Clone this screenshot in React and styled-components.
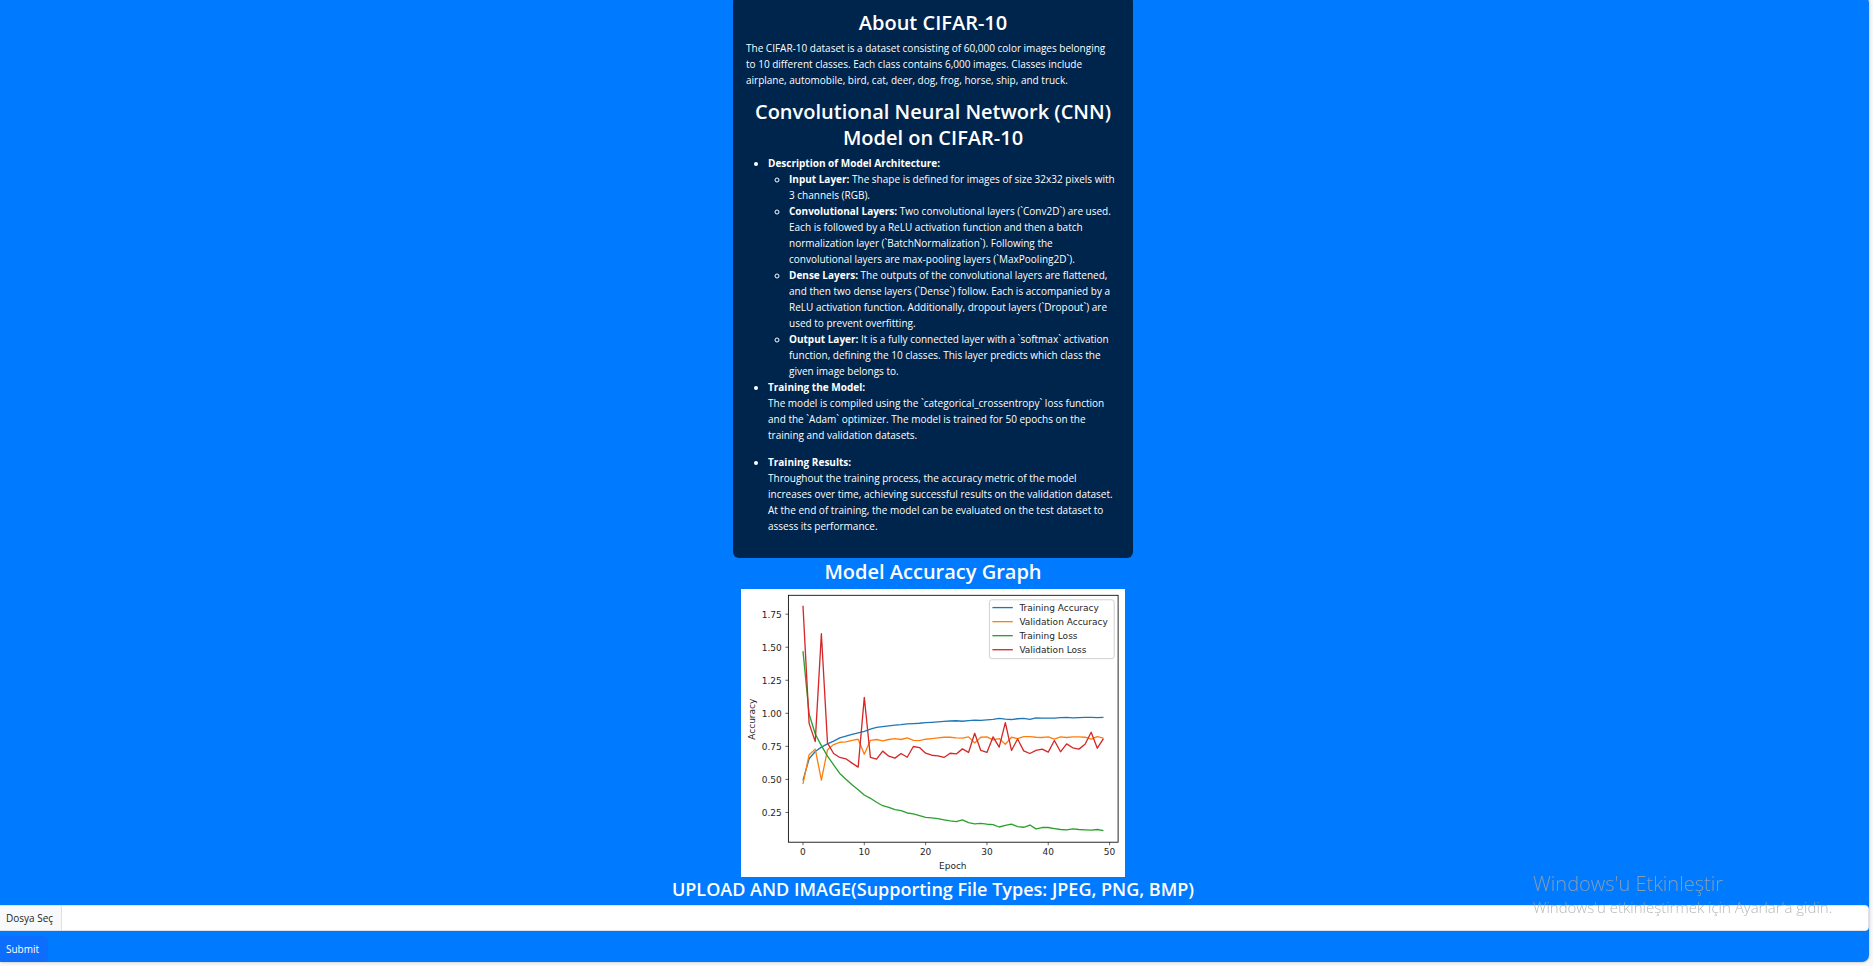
import React from "react";
import styled, { createGlobalStyle } from "styled-components";

const GlobalStyle = createGlobalStyle`
  *, *::before, *::after { box-sizing: border-box; }
  body {
    margin: 0;
    background: #f8f8f8;
    color: #fff;
    font: 400 10px/16px "Segoe UI", "Open Sans", "Noto Sans", sans-serif;
    overflow: hidden;
  }
`;

const Panel = styled.main`
  display: flex;
  flex-direction: column;
  align-items: center;
  margin: -4px 4px 4px -3px;
  background: #007bff;
  border-radius: 7px;
  box-shadow: 0 0 3px rgba(0, 0, 0, 0.3);
`;

const InfoCard = styled.article`
  width: 400px;
  max-width: 100%;
  padding: 13px;
  background: #00254c;
  border-radius: 6px;

  > p,
  > ul {
    margin-right: 3px;
  }
`;

const Title = styled.h2`
  margin: 1px 0 4px;
  font-size: 20px;
  line-height: 26px;
  font-weight: 600;
  text-align: center;
`;

const UploadTitle = styled(Title).attrs({ as: "h3" })`
  font-size: 18px;
  line-height: 23px;
`;

const Paragraph = styled.p`
  margin: 0 0 11px;
`;

const List = styled.ul`
  margin: 0;
  padding-left: 22px;
`;

const SubList = styled(List)`
  padding-left: 21px;
`;

const Chart = styled.svg`
  display: block;
  width: 384px;
  max-width: 100%;
  height: auto;
  background: #fff;
  font-family: "DejaVu Sans", sans-serif;
  font-size: 15px;
  fill: #262626;
`;

const UploadForm = styled.form`
  display: flex;
  flex-direction: column;
  align-items: flex-start;
  gap: 5px;
  width: 100%;
`;

const FileField = styled.label`
  position: relative;
  display: flex;
  width: 100%;
  height: 26px;
  overflow: hidden;
  background: #fff;
  border: 1px solid #dee2e6;
  border-radius: 4px;
  color: #212529;
`;

const FileInput = styled.input`
  position: absolute;
  inset: 0;
  width: 100%;
  opacity: 0;
  cursor: pointer;
`;

const FileButton = styled.span`
  padding: 4px 8px;
  background: #f8f9fa;
  border-right: 1px solid #dee2e6;
`;

const SubmitButton = styled.button`
  height: 26px;
  padding: 4px 8px;
  border: 1px solid #0d6efd;
  border-radius: 4px;
  background: #0d6efd;
  color: #fff;
  font: inherit;
`;

const Watermark = styled.aside`
  position: fixed;
  right: 42px;
  bottom: 49px;
  width: 298px;
  color: rgba(165, 165, 165, 0.8);
  font-size: 15px;
  line-height: 20px;
  font-weight: 300;
  white-space: nowrap;
  pointer-events: none;
`;

const WatermarkTitle = styled.div`
  font-size: 20px;
  line-height: 26px;
`;

const series = [
  {
    name: "Training Accuracy",
    color: "#1f77b4",
    values: [0.493, 0.656, 0.711, 0.744, 0.769, 0.79, 0.814, 0.827, 0.84, 0.852, 0.864, 0.88, 0.893, 0.9, 0.905, 0.91, 0.914, 0.92, 0.922, 0.925, 0.93, 0.932, 0.935, 0.939, 0.942, 0.944, 0.94, 0.945, 0.949, 0.947, 0.951, 0.954, 0.962, 0.956, 0.953, 0.959, 0.962, 0.954, 0.965, 0.963, 0.963, 0.964, 0.967, 0.969, 0.965, 0.968, 0.97, 0.97, 0.968, 0.97],
  },
  {
    name: "Validation Accuracy",
    color: "#ff7f0e",
    values: [0.467, 0.686, 0.729, 0.495, 0.724, 0.764, 0.781, 0.784, 0.796, 0.804, 0.691, 0.796, 0.802, 0.791, 0.802, 0.809, 0.802, 0.814, 0.796, 0.794, 0.804, 0.809, 0.814, 0.819, 0.819, 0.814, 0.812, 0.822, 0.776, 0.819, 0.822, 0.799, 0.809, 0.766, 0.819, 0.809, 0.824, 0.824, 0.819, 0.817, 0.822, 0.804, 0.822, 0.817, 0.822, 0.822, 0.819, 0.804, 0.824, 0.812],
  },
  {
    name: "Training Loss",
    color: "#2ca02c",
    values: [1.471, 0.995, 0.844, 0.756, 0.676, 0.61, 0.545, 0.502, 0.46, 0.422, 0.382, 0.357, 0.327, 0.301, 0.289, 0.271, 0.264, 0.246, 0.239, 0.226, 0.213, 0.209, 0.203, 0.194, 0.186, 0.181, 0.194, 0.173, 0.163, 0.168, 0.161, 0.158, 0.14, 0.153, 0.161, 0.143, 0.138, 0.155, 0.126, 0.136, 0.136, 0.128, 0.121, 0.118, 0.126, 0.121, 0.118, 0.116, 0.121, 0.113],
  },
  {
    name: "Validation Loss",
    color: "#d62728",
    values: [1.814, 0.924, 0.786, 1.602, 0.774, 0.696, 0.666, 0.656, 0.623, 0.593, 1.121, 0.666, 0.653, 0.714, 0.676, 0.661, 0.696, 0.668, 0.749, 0.741, 0.698, 0.683, 0.678, 0.666, 0.698, 0.693, 0.731, 0.704, 0.849, 0.719, 0.704, 0.822, 0.744, 0.929, 0.719, 0.806, 0.716, 0.696, 0.719, 0.729, 0.706, 0.794, 0.709, 0.769, 0.739, 0.729, 0.766, 0.857, 0.736, 0.809],
  },
];

const xTicks = [0, 10, 20, 30, 40, 50];
const yTicks = [0.25, 0.5, 0.75, 1, 1.25, 1.5, 1.75];
const xAt = (epoch) => 103.3 + epoch * 10.22;
const yAt = (value) => 207.2 + (1 - value) * 220.3;
const toPoints = (values) => values.map((v, i) => `${xAt(i)},${yAt(v)}`).join(" ");

function AccuracyChart() {
  return (
    <Chart viewBox="0 0 640 480" role="img" aria-label="Model accuracy and loss by epoch">
      {xTicks.map((t) => (
        <g key={t}>
          <path d={`M${xAt(t)} 422v5`} stroke="#000" />
          <text x={xAt(t)} y="444" textAnchor="middle">{t}</text>
        </g>
      ))}
      {yTicks.map((t) => (
        <g key={t}>
          <path d={`M79 ${yAt(t)}h-5`} stroke="#000" />
          <text x="68" y={yAt(t) + 6} textAnchor="end">{t.toFixed(2)}</text>
        </g>
      ))}
      {series.map((s) => (
        <polyline key={s.name} points={toPoints(s.values)} fill="none" stroke={s.color} strokeWidth="2.2" strokeLinejoin="round" />
      ))}
      <rect x="79" y="10.5" width="549.5" height="411.5" fill="none" stroke="#000" strokeWidth="1.4" />
      <rect x="414" y="18" width="208" height="98" rx="4" fill="#fff" stroke="#ccc" strokeWidth="1.5" />
      {series.map((s, i) => (
        <g key={s.name}>
          <path d={`M419 ${31 + i * 23.4}h34`} stroke={s.color} strokeWidth="2.2" />
          <text x="464" y={36 + i * 23.4}>{s.name}</text>
        </g>
      ))}
      <text x="353" y="467" textAnchor="middle">Epoch</text>
      <text transform="translate(23 217) rotate(-90)" textAnchor="middle">Accuracy</text>
    </Chart>
  );
}

export default function App() {
  return (
    <>
      <GlobalStyle />
      <Panel>
        <InfoCard>
          <Title>About CIFAR-10</Title>
          <Paragraph>
            The CIFAR-10 dataset is a dataset consisting of 60,000 color images belonging to 10
            different classes. Each class contains 6,000 images. Classes include airplane,
            automobile, bird, cat, deer, dog, frog, horse, ship, and truck.
          </Paragraph>
          <Title>Convolutional Neural Network (CNN) Model on CIFAR-10</Title>
          <List>
            <li>
              <strong>Description of Model Architecture:</strong>
              <SubList>
                <li>
                  <strong>Input Layer:</strong> The shape is defined for images of size 32x32 pixels
                  with 3 channels (RGB).
                </li>
                <li>
                  <strong>Convolutional Layers:</strong> Two convolutional layers (`Conv2D`) are
                  used. Each is followed by a ReLU activation function and then a batch
                  normalization layer (`BatchNormalization`). Following the convolutional layers are
                  max-pooling layers (`MaxPooling2D`).
                </li>
                <li>
                  <strong>Dense Layers:</strong> The outputs of the convolutional layers are
                  flattened, and then two dense layers (`Dense`) follow. Each is accompanied by a
                  ReLU activation function. Additionally, dropout layers (`Dropout`) are used to
                  prevent overfitting.
                </li>
                <li>
                  <strong>Output Layer:</strong> It is a fully connected layer with a `softmax`
                  activation function, defining the 10 classes. This layer predicts which class the
                  given image belongs to.
                </li>
              </SubList>
            </li>
            <li>
              <strong>Training the Model:</strong>
              <Paragraph>
                The model is compiled using the `categorical_crossentropy` loss function and the
                `Adam` optimizer. The model is trained for 50 epochs on the training and validation
                datasets.
              </Paragraph>
            </li>
            <li>
              <strong>Training Results:</strong>
              <Paragraph>
                Throughout the training process, the accuracy metric of the model increases over
                time, achieving successful results on the validation dataset. At the end of
                training, the model can be evaluated on the test dataset to assess its performance.
              </Paragraph>
            </li>
          </List>
        </InfoCard>
        <Title>Model Accuracy Graph</Title>
        <AccuracyChart />
        <UploadTitle>UPLOAD AND IMAGE(Supporting File Types: JPEG, PNG, BMP)</UploadTitle>
        <UploadForm onSubmit={(e) => e.preventDefault()}>
          <FileField>
            <FileButton>Dosya Seç</FileButton>
            <FileInput type="file" accept=".jpeg,.jpg,.png,.bmp" />
          </FileField>
          <SubmitButton type="submit">Submit</SubmitButton>
        </UploadForm>
      </Panel>
      <Watermark>
        <WatermarkTitle>Windows'u Etkinleştir</WatermarkTitle>
        Windows'u etkinleştirmek için Ayarlar'a gidin.
      </Watermark>
    </>
  );
}
